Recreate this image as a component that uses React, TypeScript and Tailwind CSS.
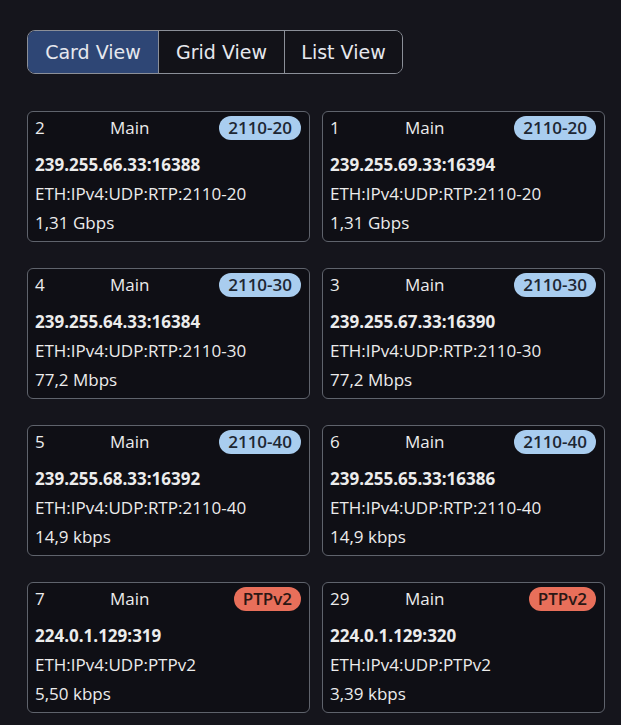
import React from "react";

type Stream = {
  id: string;
  addr: string;
  proto: string;
  rate: string;
  tag: string;
};

const streams: Stream[] = [
  { id: "2", addr: "239.255.66.33:16388", proto: "ETH:IPv4:UDP:RTP:2110-20", rate: "1,31 Gbps", tag: "2110-20" },
  { id: "1", addr: "239.255.69.33:16394", proto: "ETH:IPv4:UDP:RTP:2110-20", rate: "1,31 Gbps", tag: "2110-20" },
  { id: "4", addr: "239.255.64.33:16384", proto: "ETH:IPv4:UDP:RTP:2110-30", rate: "77,2 Mbps", tag: "2110-30" },
  { id: "3", addr: "239.255.67.33:16390", proto: "ETH:IPv4:UDP:RTP:2110-30", rate: "77,2 Mbps", tag: "2110-30" },
  { id: "5", addr: "239.255.68.33:16392", proto: "ETH:IPv4:UDP:RTP:2110-40", rate: "14,9 kbps", tag: "2110-40" },
  { id: "6", addr: "239.255.65.33:16386", proto: "ETH:IPv4:UDP:RTP:2110-40", rate: "14,9 kbps", tag: "2110-40" },
  { id: "7", addr: "224.0.1.129:319", proto: "ETH:IPv4:UDP:PTPv2", rate: "5,50 kbps", tag: "PTPv2" },
  { id: "29", addr: "224.0.1.129:320", proto: "ETH:IPv4:UDP:PTPv2", rate: "3,39 kbps", tag: "PTPv2" },
];

const views = [
  { label: "Card View", w: "w-[130px]" },
  { label: "Grid View", w: "w-[126px]" },
  { label: "List View", w: "w-[118px]" },
];

function StreamCard({ s }: { s: Stream }) {
  const ptp = s.tag === "PTPv2";
  return (
    <div className="rounded-md border border-[#5f636c] bg-[#0f0f15] px-[7px] pt-[4px] pb-[4px] text-[17px] text-[#ececec]">
      <div className="flex h-[24px] items-center">
        <span className="w-[75px]">{s.id}</span>
        <span>Main</span>
        <span
          className={
            "ml-auto mr-[1px] flex h-[24px] items-center rounded-full px-[9px] text-[17px] font-semibold " +
            (ptp ? "bg-[#e86f5a] text-[#2a1714]" : "bg-[#a9cdef] text-[#1d2733]")
          }
        >
          {s.tag}
        </span>
      </div>
      <div className="mt-[10px] leading-[29px]">
        <div className="font-bold">{s.addr}</div>
        <div>{s.proto}</div>
        <div>{s.rate}</div>
      </div>
    </div>
  );
}

export default function App() {
  return (
    <div className="min-h-screen bg-[#15151c] pl-[27px] pt-[30px] pb-4 font-['Open_Sans','Noto_Sans',sans-serif]">
      {/* view switcher */}
      <div className="inline-flex h-[44px] overflow-hidden rounded-lg border border-[#8b8f98] font-['DejaVu_Sans',sans-serif] text-[19px] text-[#e6e8ee]">
        {views.map((v, i) => (
          <div
            key={v.label}
            className={
              "flex items-center justify-center " +
              v.w +
              (i > 0 ? " border-l border-[#8b8f98]" : "") +
              (i === 0 ? " bg-[#2e4675]" : " bg-[#121218]")
            }
          >
            {v.label}
          </div>
        ))}
      </div>

      <div className="mt-[37px] grid w-[578px] grid-cols-2 gap-x-3 gap-y-[26px]">
        {streams.map((s) => (
          <StreamCard key={s.id} s={s} />
        ))}
      </div>
    </div>
  );
}
